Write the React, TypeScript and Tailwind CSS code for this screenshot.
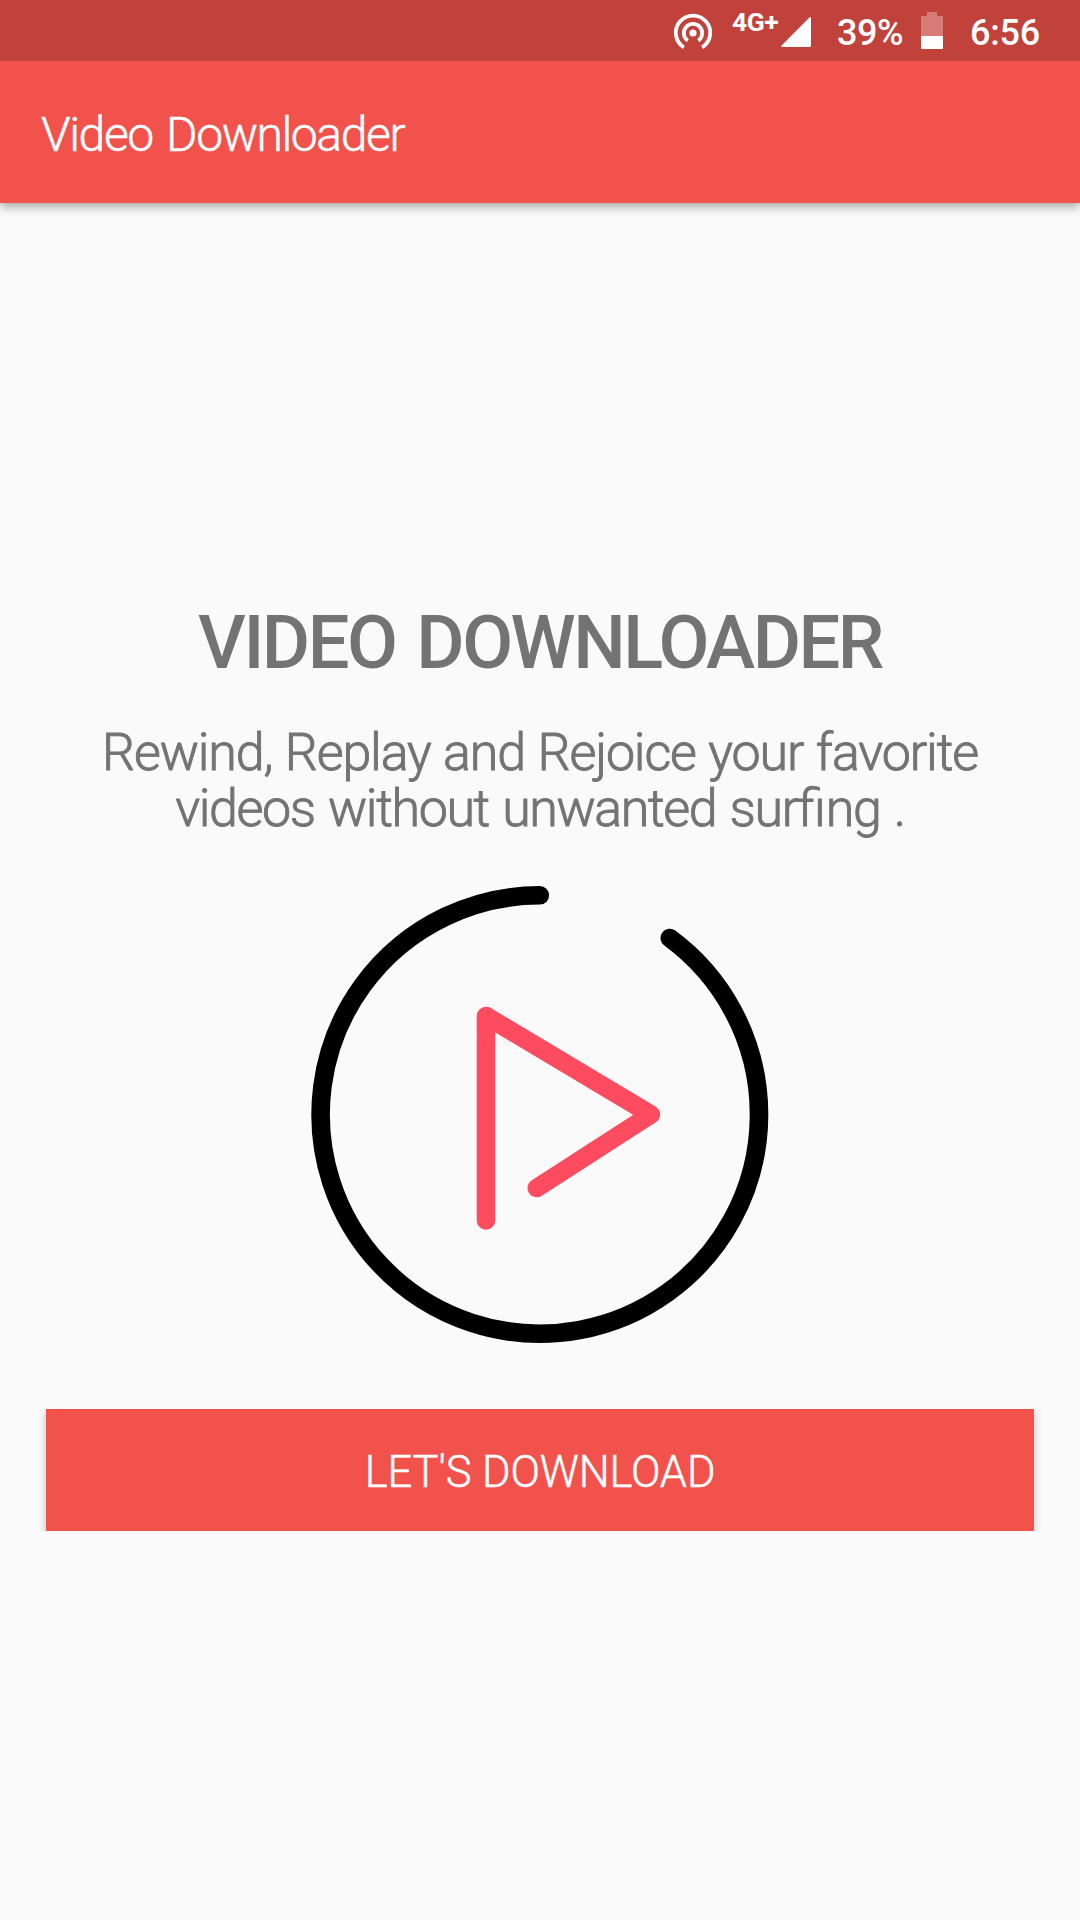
function StatusBar() {
  return (
    <header className="flex h-[61px] items-start bg-[#c1413b] pl-[673px] text-white">
      <svg className="mt-[13px] h-10 w-10 shrink-0" viewBox="0 0 40 40" fill="none" stroke="currentColor" strokeWidth="3.8">
        <path d="M10.9 34.4A17.2 17.2 0 1 1 29.1 34.4" />
        <path d="M14.7 27.6A9.2 9.2 0 1 1 25.3 27.6" />
        <circle cx="20" cy="20" r="3.6" fill="currentColor" stroke="none" />
      </svg>
      <span className="ml-[19px] mt-[7px] w-[49px] shrink-0 text-[26.5px] font-bold leading-[30px] tracking-[-0.5px]">4G+</span>
      <svg className="mt-[17px] h-[30px] w-[30px] shrink-0" viewBox="0 0 30 30" fill="currentColor">
        <path d="M30 1.4V28.6Q30 30 28.6 30H1.4Q-.6 30 .6 28.4L28.4.6Q30-.4 30 1.4Z" />
      </svg>
      <span className="ml-[26px] mt-[12px] w-[84px] shrink-0 text-[36px] font-medium leading-[42px] tracking-[-0.5px]">39%</span>
      <svg className="mt-[12px] h-[37px] w-[22px] shrink-0" viewBox="0 0 22 37">
        <path d="M6 0H16V4H22V24H0V4H6Z" fill="#d67b77" />
        <path d="M0 24H22V37H0Z" fill="white" />
      </svg>
      <span className="ml-[27px] mt-[12px] shrink-0 text-[36px] font-medium leading-[42px] tracking-[-0.2px]">6:56</span>
    </header>
  );
}

function PlayMark() {
  return (
    <svg className="h-[460px] w-[460px]" viewBox="310.2 885 460 460" fill="none" strokeWidth="18.6" strokeLinecap="round" strokeLinejoin="round">
      <path d="M540 895.3A219.2 219.2 0 1 0 670 938" stroke="black" />
      <path d="M486.2 1220.5V1016L651 1114.5L537 1188" stroke="#fd4b5f" />
    </svg>
  );
}

export default function App() {
  return (
    <div className="flex h-[1920px] w-[1080px] flex-col overflow-hidden bg-[#fafafa] font-['Roboto',sans-serif]">
      <StatusBar />
      <div className="flex h-[142px] items-center bg-[#f1524b] pl-10 shadow-[0_3px_10px_rgba(0,0,0,0.38)] [clip-path:inset(0_0_-20px_0)]">
        <h1 className="ml-[1px] mt-[6px] text-[48px] font-[350] leading-[60px] tracking-[-1.4px] text-white [-webkit-text-stroke:0.5px_currentColor] [word-spacing:3px]">Video Downloader</h1>
      </div>
      <main className="flex flex-col items-center px-[46px] pt-[393px] text-[#737373]">
        <h2 className="whitespace-nowrap text-[74px] font-medium leading-[94px] tracking-[-2.5px] [word-spacing:5px]">VIDEO DOWNLOADER</h2>
        <p className="mt-[35px] whitespace-nowrap text-center text-[52px] font-[350] leading-[56px] tracking-[-1.15px] [-webkit-text-stroke:0.9px_currentColor] [word-spacing:1px]">
          Rewind, Replay and Rejoice your favorite
          <br />
          <span className="tracking-[-1.4px] [word-spacing:2px]">
            videos without unwanted sur<span className="tracking-normal">fi</span>ng .
          </span>
        </p>
        <div className="mt-[48px]">
          <PlayMark />
        </div>
        <button className="mt-[64px] h-[122px] w-full bg-[#f1524b] pt-[5px] text-[43.5px] font-[350] leading-[60px] tracking-[-0.1px] text-white shadow-[0_2px_8px_rgba(0,0,0,0.24)] [-webkit-text-stroke:0.5px_currentColor] [clip-path:inset(0_-12px)]">
          LET&apos;S DOWNLOAD
        </button>
      </main>
    </div>
  );
}
